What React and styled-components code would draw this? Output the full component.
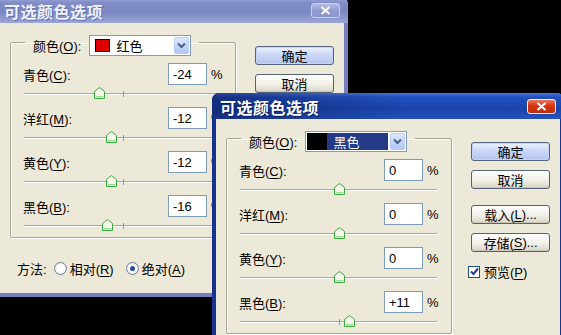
import React from 'react'
import styled, { createGlobalStyle, css } from 'styled-components'

const GlobalStyle = createGlobalStyle`
  html, body {
    margin: 0;
    padding: 0;
    background: #000;
  }
  body {
    overflow: hidden;
  }
`

const UI_FONT = `"Liberation Sans", "Noto Sans CJK SC", sans-serif`

const ROWS = [
  { name: '青色', key: 'C' },
  { name: '洋红', key: 'M' },
  { name: '黄色', key: 'Y' },
  { name: '黑色', key: 'B' },
]

const WINDOWS = [
  {
    id: 'back',
    left: -4,
    top: -3,
    active: false,
    swatch: '#e00000',
    colorName: '红色',
    values: [-24, -12, -12, -16],
    method: true,
    extras: false,
  },
  {
    id: 'front',
    left: 212,
    top: 93,
    active: true,
    swatch: '#000',
    colorName: '黑色',
    values: [0, 0, 0, 11],
    method: false,
    extras: true,
  },
]

function App() {
  return (
    <>
      <GlobalStyle />
      <Desktop>
        {WINDOWS.map(w => (
          <SelectiveColorDialog key={w.id} {...w} />
        ))}
      </Desktop>
    </>
  )
}

function SelectiveColorDialog({ left, top, active, swatch, colorName, values, method, extras }) {
  return (
    <Window $left={left} $top={top} $active={active}>
      <TitleBar $active={active}>
        <Title $active={active}>可选颜色选项</Title>
        <CloseButton $active={active}>
          <svg width="11" height="9" viewBox="0 0 11 9">
            <path d="M1.5 1 L9.5 8 M9.5 1 L1.5 8" stroke="#fff" strokeWidth="2" />
          </svg>
        </CloseButton>
      </TitleBar>

      <Body>
        <MainColumn>
          <Group>
            <Legend>
              <span>颜色(<u>O</u>):</span>
              <Dropdown>
                <DropField $selected={active}>
                  <Swatch $color={swatch} $selected={active} />
                  <span>{colorName}</span>
                </DropField>
                <DropArrow>
                  <svg width="9" height="7" viewBox="0 0 9 7">
                    <path d="M1 1.5 L4.5 5 L8 1.5" fill="none" stroke="#4d6185" strokeWidth="2" />
                  </svg>
                </DropArrow>
              </Dropdown>
            </Legend>

            <Rows>
              {ROWS.map((r, i) => (
                <Row key={r.key}>
                  <ValueLine>
                    <span>{r.name}(<u>{r.key}</u>):</span>
                    <NumberBox>{values[i] > 0 ? `+${values[i]}` : values[i]}</NumberBox>
                    <Percent>%</Percent>
                  </ValueLine>
                  <Slider>
                    <Track />
                    <Tick />
                    <Thumb $pos={50 + values[i] / 2}>
                      <svg width="11" height="12" viewBox="0 0 11 12">
                        <path d="M5.5 0.5 L10.5 4.5 V11.5 H0.5 V4.5 Z" fill="#f7f7f0" stroke="#3ea93e" />
                        <path d="M1.5 9 H9.5 V10.5 H1.5 Z" fill="#9ddc9d" />
                      </svg>
                    </Thumb>
                  </Slider>
                </Row>
              ))}
            </Rows>
          </Group>

          {method && (
            <MethodRow>
              <span>方法:</span>
              <Choice>
                <Radio />
                <span>相对(<u>R</u>)</span>
              </Choice>
              <Choice>
                <Radio $checked />
                <span>绝对(<u>A</u>)</span>
              </Choice>
            </MethodRow>
          )}
        </MainColumn>

        <SideColumn>
          <Button $default>确定</Button>
          <Button>取消</Button>
          {extras && (
            <>
              <Button $spaced>载入(<u>L</u>)...</Button>
              <Button>存储(<u>S</u>)...</Button>
              <CheckRow>
                <CheckBox>
                  <svg width="9" height="9" viewBox="0 0 9 9">
                    <path d="M1 4.5 L3.5 7 L8 1.5" fill="none" stroke="#21399c" strokeWidth="2" />
                  </svg>
                </CheckBox>
                <span>预览(<u>P</u>)</span>
              </CheckRow>
            </>
          )}
        </SideColumn>
      </Body>
    </Window>
  )
}

export default App

const Desktop = styled.div`
  position: relative;
  width: 561px;
  height: 335px;
  background: #000;
  overflow: hidden;
  font-family: ${UI_FONT};
  font-size: 13px;
  color: #000;

  u {
    text-decoration: underline;
    text-underline-offset: 2px;
  }
`

const Window = styled.div`
  position: absolute;
  left: ${p => p.$left}px;
  top: ${p => p.$top}px;
  width: 352px;
  height: 300px;
  box-sizing: border-box;
  display: flex;
  flex-direction: column;
  border: 4px solid ${p => (p.$active ? '#16338f' : '#757fbd')};
  border-top: 0;
  border-radius: 7px 7px 0 0;
  background: #ece9d8;
`

const TitleBar = styled.div`
  height: 26px;
  box-sizing: border-box;
  margin: 0 -4px;
  padding: 2px 8px 0 8px;
  display: flex;
  align-items: center;
  justify-content: space-between;
  border-radius: 7px 7px 0 0;
  ${p =>
    p.$active
      ? css`
          background: linear-gradient(to right, rgba(8, 18, 70, 0.5), rgba(8, 18, 70, 0) 55%),
            linear-gradient(to bottom, #4a76dc 0%, #2150c0 16%, #1b44aa 60%, #2452bc 100%);
        `
      : css`
          background: linear-gradient(to bottom, #a4afdd 0%, #7f8cc6 22%, #7b88c2 60%, #9ca7d6 100%);
        `}
`

const Title = styled.div`
  font-family: "Noto Sans CJK SC", sans-serif;
  font-weight: 700;
  font-size: 16px;
  line-height: 20px;
  letter-spacing: 0.5px;
  color: ${p => (p.$active ? '#fff' : '#eef0fa')};
  text-shadow: ${p => (p.$active ? '1px 1px 0 #0b1a5e' : '1px 1px 0 #6470ad')};
`

const CloseButton = styled.div`
  width: 29px;
  height: 15px;
  margin-top: -2px;
  box-sizing: border-box;
  display: flex;
  align-items: center;
  justify-content: center;
  border-radius: 3px;
  border: 1px solid ${p => (p.$active ? '#f4f4f4' : '#c9d0ee')};
  background: ${p =>
    p.$active
      ? 'linear-gradient(to bottom, #e87a5c, #d6340f 45%, #c42a08)'
      : 'linear-gradient(to bottom, #b3bde6, #8f9bd2 50%, #8a96cd)'};
`

const Body = styled.div`
  flex: 1;
  display: flex;
  padding: 5px 0 0 10px;
`

const MainColumn = styled.div`
  display: flex;
  flex-direction: column;
`

const Group = styled.fieldset`
  width: 226px;
  box-sizing: border-box;
  margin: 0;
  padding: 7px 14px 0 12px;
  min-width: 0;
  border: 1px solid #a8a596;
  border-radius: 2px;
  box-shadow: 1px 1px 0 #fff, inset 1px 1px 0 #fff;
`

const Legend = styled.legend`
  display: flex;
  align-items: center;
  gap: 8px;
  margin-left: 2px;
  padding: 7px 8px 0 8px;
`

const Dropdown = styled.div`
  width: 102px;
  height: 21px;
  box-sizing: border-box;
  display: flex;
  border: 1px solid #7f9db9;
  background: #fff;
  padding: 1px;
`

const DropField = styled.div`
  flex: 1;
  display: flex;
  align-items: center;
  gap: 6px;
  margin-right: 2px;
  padding-left: ${p => (p.$selected ? 0 : '4px')};
  background: ${p => (p.$selected ? '#233a86' : 'transparent')};
  color: ${p => (p.$selected ? '#fff' : '#000')};
`

const Swatch = styled.div`
  width: ${p => (p.$selected ? '20px' : '15px')};
  height: ${p => (p.$selected ? '100%' : '13px')};
  box-sizing: border-box;
  background: ${p => p.$color};
  border: ${p => (p.$selected ? '0' : '1px solid #000')};
`

const DropArrow = styled.div`
  width: 15px;
  box-sizing: border-box;
  display: flex;
  align-items: center;
  justify-content: center;
  border: 1px solid #b9cdf5;
  border-radius: 2px;
  background: linear-gradient(to bottom, #dfe8fd, #c0d2fb 60%, #b2c6f5);
`

const Rows = styled.div`
  display: grid;
  gap: 2px;
`

const Row = styled.div`
  display: flex;
  flex-direction: column;
`

const ValueLine = styled.div`
  display: grid;
  grid-template-columns: 1fr 39px 9px;
  column-gap: 5px;
  align-items: center;
  height: 22px;
`

const NumberBox = styled.div`
  height: 22px;
  box-sizing: border-box;
  display: flex;
  align-items: center;
  padding-left: 4px;
  border: 1px solid #7f9db9;
  background: #fff;
`

const Percent = styled.span`
  font-size: 13px;
  margin-left: -1px;
`

const Slider = styled.div`
  position: relative;
  height: 20px;
  margin-left: 1px;
`

const Track = styled.div`
  margin-top: 8px;
  height: 0;
  border-top: 1px solid #a8a69d;
  border-bottom: 1px solid #fff;
`

const Tick = styled.div`
  position: absolute;
  left: 50%;
  top: 6px;
  width: 1px;
  height: 6px;
  background: #9a988f;
`

const Thumb = styled.div`
  position: absolute;
  top: 2px;
  left: calc(${p => p.$pos}% - 5px);
  width: 11px;
  height: 12px;
  line-height: 0;
`

const MethodRow = styled.div`
  display: flex;
  align-items: center;
  margin-top: 22px;
  padding-left: 7px;
  height: 16px;

  & > span {
    margin-right: 7px;
  }
`

const Choice = styled.label`
  display: flex;
  align-items: center;
  gap: 3px;
  margin-right: 12px;
`

const Radio = styled.span`
  width: 13px;
  height: 13px;
  box-sizing: border-box;
  border-radius: 50%;
  border: 1px solid #6f7f96;
  background: radial-gradient(circle, #fff 40%, #dcdcd4 100%);
  display: flex;
  align-items: center;
  justify-content: center;

  &::after {
    content: '';
    width: 5px;
    height: 5px;
    border-radius: 50%;
    background: ${p => (p.$checked ? '#2a4b9c' : 'transparent')};
  }
`

const SideColumn = styled.div`
  display: flex;
  flex-direction: column;
  gap: 9px;
  margin: 18px 0 0 19px;
`

const Button = styled.div`
  width: 79px;
  height: 19px;
  box-sizing: border-box;
  display: flex;
  align-items: center;
  justify-content: center;
  border: 1px solid #56627a;
  border-radius: 3px;
  margin-top: ${p => (p.$spaced ? '7px' : '0')};
  background: ${p =>
    p.$default
      ? 'linear-gradient(to bottom, #eef2fd 0%, #ccd8f6 45%, #b3c3ec 100%)'
      : 'linear-gradient(to bottom, #ffffff 0%, #f1efe7 55%, #d9d4c6 100%)'};
  box-shadow: ${p => (p.$default ? 'inset 0 0 0 1px #c5d4f7' : 'inset 0 -1px 0 #cbc6b6')};
`

const CheckRow = styled.label`
  display: flex;
  align-items: center;
  gap: 4px;
  margin: 1px 0 0 -3px;
`

const CheckBox = styled.span`
  width: 12px;
  height: 12px;
  box-sizing: border-box;
  display: flex;
  align-items: center;
  justify-content: center;
  border: 1px solid #1c5180;
  background: #fff;
`
